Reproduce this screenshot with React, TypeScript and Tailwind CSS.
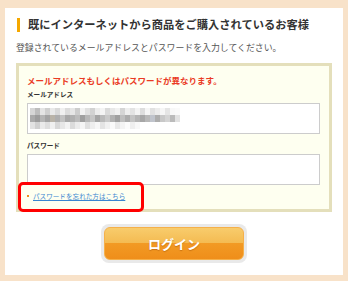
import React from 'react';

const mosaic = [
  ['bg-[#d6d6d6]', 'bg-[#bdbdbd]', 'bg-[#e4e4e4]', 'bg-[#cfcfcf]', 'bg-[#e9e9e9]', 'bg-[#d9d9d9]', 'bg-[#f0f0f0]', 'bg-[#dcdcdc]', 'bg-[#e6e6e6]', 'bg-[#cdcdcd]', 'bg-[#f2f2f2]', 'bg-[#e0e0e0]', 'bg-[#d2d2d2]', 'bg-[#ececec]', 'bg-[#f4f4f4]', 'bg-[#dadada]', 'bg-[#e8e8e8]', 'bg-[#f1f1f1]', 'bg-[#d5d5d5]', 'bg-[#eeeeee]', 'bg-[#e3e3e3]', 'bg-[#f3f3f3]', 'bg-[#dddddd]', 'bg-[#f5f5f5]', 'bg-[#e1e1e1]', 'bg-[#ececec]', 'bg-[#f6f6f6]', 'bg-[#e5e5e5]', 'bg-[#f8f8f8]', 'bg-[#fafafa]', 'bg-[#ffffff]'],
  ['bg-[#aaaaaa]', 'bg-[#9c9c9c]', 'bg-[#b5b5b5]', 'bg-[#a3a3a3]', 'bg-[#b9b3a8]', 'bg-[#aeaeae]', 'bg-[#c2c2c2]', 'bg-[#a8a8a8]', 'bg-[#b0b0b0]', 'bg-[#bcbcbc]', 'bg-[#9f9f9f]', 'bg-[#b7b7b7]', 'bg-[#c6c6c6]', 'bg-[#a5a5a5]', 'bg-[#bababa]', 'bg-[#c9c9c9]', 'bg-[#b2b2b2]', 'bg-[#a0a0a0]', 'bg-[#bfbfbf]', 'bg-[#acacac]', 'bg-[#c4c4c4]', 'bg-[#b4b4b4]', 'bg-[#a7a7a7]', 'bg-[#b8b8b8]', 'bg-[#c0c4cc]', 'bg-[#adadad]', 'bg-[#c8c8c8]', 'bg-[#d4d4d4]', 'bg-[#bbbbbb]', 'bg-[#e2e2e2]', 'bg-[#ffffff]'],
  ['bg-[#e2e2e2]', 'bg-[#d0d0d0]', 'bg-[#eaeaea]', 'bg-[#dedede]', 'bg-[#f0f0f0]', 'bg-[#d8d8d8]', 'bg-[#e7e7e7]', 'bg-[#f3f3f3]', 'bg-[#dbdbdb]', 'bg-[#ebebeb]', 'bg-[#f5f5f5]', 'bg-[#e0e0e0]', 'bg-[#eeeeee]', 'bg-[#f7f7f7]', 'bg-[#e4e4e4]', 'bg-[#f1f1f1]', 'bg-[#fafafa]', 'bg-[#e9e9e9]', 'bg-[#f4f4f4]', 'bg-[#fcfcfc]', 'bg-[#efefef]', 'bg-[#f8f8f8]', 'bg-[#ffffff]', 'bg-[#ffffff]', 'bg-[#ffffff]', 'bg-[#ffffff]', 'bg-[#ffffff]', 'bg-[#ffffff]', 'bg-[#ffffff]', 'bg-[#ffffff]', 'bg-[#ffffff]'],
];

export default function App() {
  return (
    <div className="relative h-[281px] w-[348px] overflow-hidden bg-[#f8e2c9] px-[5px] pt-[8px] font-['Noto_Sans_CJK_JP',sans-serif]">
      <div className="flex h-[267px] flex-col bg-white">
        <div className="mt-[9px] flex items-center gap-[8px] pl-[12px]">
          <div className="h-[14px] w-[3px] bg-[#f5a800]"></div>
          <h1 className="text-[11.25px] font-bold leading-[15px] text-[#333]">
            既にインターネットから商品をご購入されているお客様
          </h1>
        </div>
        <p className="mt-[10px] pl-[11px] text-[8.9px] leading-[12px] text-[#555]">
          登録されているメールアドレスとパスワードを入力してください。
        </p>
        <div className="mx-[11px] mt-[9px] h-[149px] border-[3px] border-[#e4dfbb] bg-[#fefff0] pl-[8px] pr-[9px] pt-[8px]">
          <div className="text-[8.5px] font-bold leading-[12px] text-[#ea3a24]">
            メールアドレスもしくはパスワードが異なります。
          </div>
          <div className="mt-[3px] text-[6.6px] font-bold leading-[10px] text-[#333]">メールアドレス</div>
          <div className="mt-[4px] flex h-[31px] items-center border border-[#cccccc] bg-white pl-[2px]">
            <div className="flex flex-col">
              {mosaic.map((row, r) => (
                <div key={r} className="flex">
                  {row.map((c, i) => (
                    <div key={i} className={`h-[7px] w-[5px] ${c}`}></div>
                  ))}
                </div>
              ))}
            </div>
          </div>
          <div className="mt-[6px] text-[6.6px] font-bold leading-[10px] text-[#333]">パスワード</div>
          <div className="mt-[4px] h-[31px] border border-[#cccccc] bg-white"></div>
          <div className="mt-[6px] flex items-center gap-[4px] text-[6.6px] leading-[10px]">
            <span className="h-[2px] w-[2px] bg-[#f08c1a]"></span>
            <a href="#" className="text-[#3a86d0] underline">パスワードを忘れた方はこちら</a>
          </div>
        </div>
        <div className="mt-[12px] flex justify-center">
          <div className="rounded-[8px] bg-[#e9e9e9] p-[3px]">
            <button className="flex h-[33px] w-[140px] items-center justify-center rounded-[6px] border border-[#f5b04a] bg-[linear-gradient(to_bottom,#f8cc6c_0%,#f4bb52_48%,#f29a24_50%,#ef8e1a_100%)] text-[13px] font-bold text-white [text-shadow:0_1px_1px_rgba(150,70,0,0.45)]">
              ログイン
            </button>
          </div>
        </div>
      </div>
      <div className="absolute left-[18px] top-[182px] h-[30px] w-[126px] rounded-[5px] border-[3px] border-[#ff0000]"></div>
    </div>
  );
}
